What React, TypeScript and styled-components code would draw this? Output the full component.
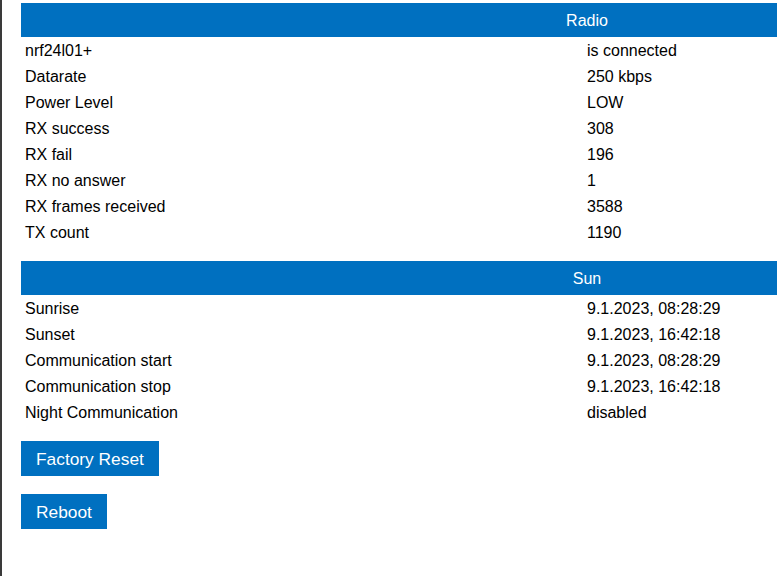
import * as React from "react";
import styled, { createGlobalStyle } from "styled-components";

const GlobalStyle = createGlobalStyle`
  html, body {
    margin: 0;
    padding: 0;
    overflow: hidden;
    background: #ffffff;
  }
  body {
    font-family: "Liberation Sans", Arial, sans-serif;
    color: #000000;
  }
`;

const Page = styled.div`
  min-height: 576px;
  box-sizing: border-box;
  border-left: 2px solid #3a3a3a;
  padding: 3px 0 0 19px;
  display: flex;
  flex-direction: column;
  align-items: flex-start;
`;

// the table is wider than the window, as in the original page
const Section = styled.div`
  width: 1132px;
  display: grid;
  grid-template-columns: 562px 1fr;
  margin-bottom: 16px;
`;

const SectionHeader = styled.div`
  grid-column: 1 / span 2;
  box-sizing: border-box;
  height: 34px;
  padding-top: 1px;
  line-height: 34px;
  background: #0070c0;
  color: #ffffff;
  font-size: 16px;
  text-align: center;
`;

const Cell = styled.div`
  box-sizing: border-box;
  height: 26px;
  padding: 1px 0 0 4px;
  line-height: 26px;
  font-size: 16px;
  white-space: nowrap;
`;

const Button = styled.button`
  box-sizing: border-box;
  height: 35px;
  padding: 2px 15px 0;
  margin-bottom: 18px;
  border: none;
  border-radius: 0;
  background: #0070c0;
  color: #ffffff;
  font-family: "Liberation Sans", Arial, sans-serif;
  font-size: 17.33px;
  line-height: 33px;
  cursor: pointer;
`;

type Row = [string, string];

const radio: Row[] = [
  ["nrf24l01+", "is connected"],
  ["Datarate", "250 kbps"],
  ["Power Level", "LOW"],
  ["RX success", "308"],
  ["RX fail", "196"],
  ["RX no answer", "1"],
  ["RX frames received", "3588"],
  ["TX count", "1190"],
];

const sun: Row[] = [
  ["Sunrise", "9.1.2023, 08:28:29"],
  ["Sunset", "9.1.2023, 16:42:18"],
  ["Communication start", "9.1.2023, 08:28:29"],
  ["Communication stop", "9.1.2023, 16:42:18"],
  ["Night Communication", "disabled"],
];

const InfoTable = ({ title, rows }: { title: string; rows: Row[] }) => (
  <Section>
    <SectionHeader>{title}</SectionHeader>
    {rows.map(([k, v]) => (
      <React.Fragment key={k}>
        <Cell>{k}</Cell>
        <Cell>{v}</Cell>
      </React.Fragment>
    ))}
  </Section>
);

export default function App() {
  return (
    <>
      <GlobalStyle />
      <Page>
        <InfoTable title="Radio" rows={radio} />
        <InfoTable title="Sun" rows={sun} />
        <Button>Factory Reset</Button>
        <Button>Reboot</Button>
      </Page>
    </>
  );
}
